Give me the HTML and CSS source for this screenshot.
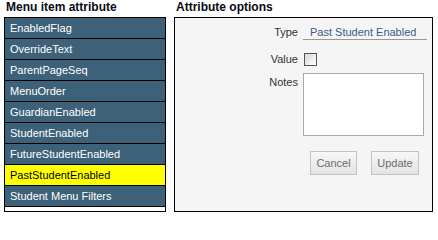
FILE: index.html
```html
<!DOCTYPE html>
<html>
<head>
<meta charset="utf-8">
<link rel="stylesheet" href="styles.css">
</head>
<body>
<div class="page">
  <section class="col col-left">
    <h2 class="heading">Menu item attribute</h2>
    <ul class="attr-list">
      <li class="attr-item">EnabledFlag</li>
      <li class="attr-item">OverrideText</li>
      <li class="attr-item">ParentPageSeq</li>
      <li class="attr-item">MenuOrder</li>
      <li class="attr-item">GuardianEnabled</li>
      <li class="attr-item">StudentEnabled</li>
      <li class="attr-item">FutureStudentEnabled</li>
      <li class="attr-item selected">PastStudentEnabled</li>
      <li class="attr-item">Student Menu Filters</li>
    </ul>
  </section>
  <section class="col col-right">
    <h2 class="heading">Attribute options</h2>
    <div class="panel">
      <div class="form">
        <div class="label row-type">Type</div>
        <div class="type-value row-type">Past Student Enabled</div>
        <div class="label row-value">Value</div>
        <div class="row-value"><span class="checkbox"></span></div>
        <div class="label row-notes label-notes">Notes</div>
        <div class="row-notes"><div class="notes"></div></div>
        <div class="row-buttons"></div>
        <div class="row-buttons buttons">
          <button class="btn btn-cancel">Cancel</button>
          <button class="btn btn-update">Update</button>
        </div>
      </div>
    </div>
  </section>
</div>
</body>
</html>
```
FILE: styles.css
```css
html, body {
  margin: 0;
  padding: 0;
  background: #ffffff;
}
body {
  font-family: "Liberation Sans", Arial, sans-serif;
  font-size: 11px;
  color: #000;
}
.page {
  display: flex;
  gap: 8px;
  padding-left: 4px;
}
.col {
  display: flex;
  flex-direction: column;
}
.col-left { width: 162px; }
.col-right { width: 259px; }
.heading {
  margin: 0 0 0 2px;
  height: 17px;
  font-size: 12px;
  font-weight: bold;
  line-height: 14px;
  color: #0a0a14;
}
.attr-list {
  list-style: none;
  margin: 0;
  padding: 0 0 4px 0;
  border: 1px solid #000;
  background: #fff;
}
.attr-item {
  height: 20px;
  line-height: 20px;
  padding-left: 5px;
  background: #3c6178;
  color: #fff;
  border-bottom: 1px solid #000;
  font-size: 11px;
  white-space: nowrap;
}
.attr-item.selected {
  background: #ffff00;
  color: #000;
}
.panel {
  height: 193px;
  border: 1px solid #000;
  background: #f5f5f5;
}
.form {
  display: grid;
  grid-template-columns: 123px 124px;
  column-gap: 5px;
  padding-top: 8px;
}
.label {
  text-align: right;
  color: #333;
  line-height: 13px;
}
.type-value {
  line-height: 13px;
  padding-left: 7px;
  color: #3a5a8c;
  border-bottom: 1px solid #999;
}
.row-value { margin-top: 13px; line-height: 13px; }
.checkbox {
  display: block;
  width: 11px;
  height: 11px;
  margin-left: 1px;
  border: 1px solid #555;
  background: linear-gradient(135deg, #d8d8d8, #ffffff);
}
.row-notes { margin-top: 7px; }
.label-notes { padding-top: 3px; }
.notes {
  width: 119px;
  height: 61px;
  border: 1px solid #aaa;
  background: #fff;
}
.row-buttons { margin-top: 15px; }
.buttons {
  display: flex;
  gap: 14px;
  padding-left: 7px;
}
.btn {
  height: 24px;
  padding: 0;
  border: 1px solid #c2c2c2;
  background: linear-gradient(#f7f7f7, #e3e3e3);
  color: #6b6b6b;
  font-family: "Liberation Sans", Arial, sans-serif;
  font-size: 11px;
}
.btn-cancel { width: 47px; }
.btn-update { width: 48px; }
```
